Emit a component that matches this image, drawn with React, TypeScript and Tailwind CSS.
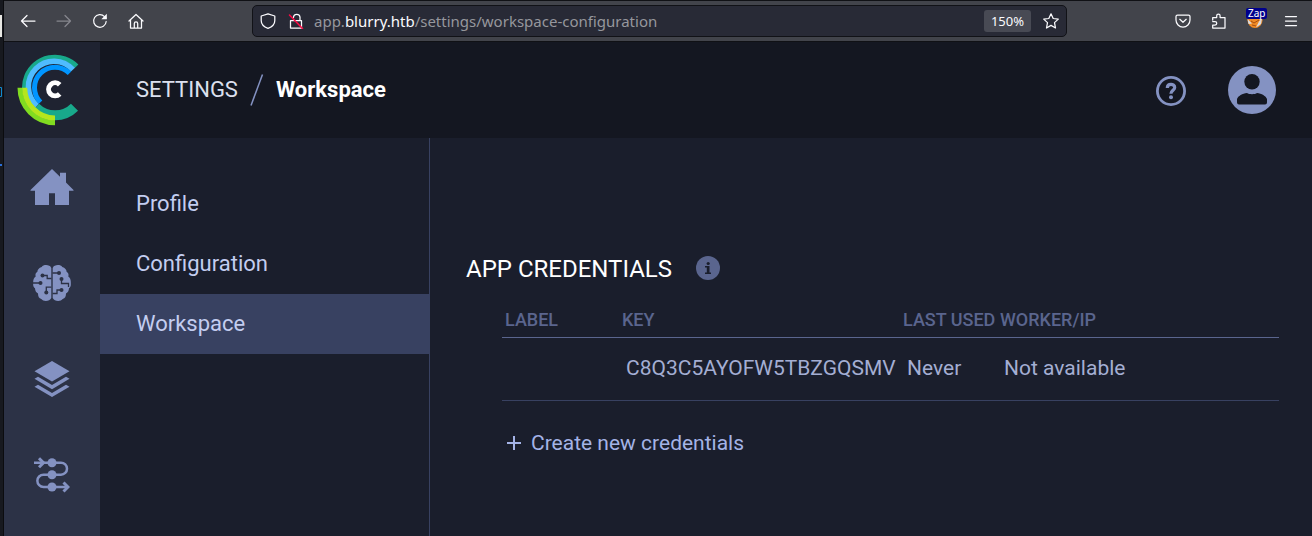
import type { ReactNode } from "react";

const navItems = ["Profile", "Configuration", "Workspace"];

function ToolButton({ label, children, dim }: { label: string; children: ReactNode; dim?: boolean }) {
  return (
    <button type="button" aria-label={label} className={dim ? "text-[#85868d]" : "text-[#fbfbfe]"}>
      <svg width="16" height="16" viewBox="0 0 16 16" fill="none" stroke="currentColor" strokeWidth="1.25" strokeLinecap="round" strokeLinejoin="round">
        {children}
      </svg>
    </button>
  );
}

function Browser() {
  return (
    <div className="flex h-[42px] shrink-0 items-center border-t border-b border-[#101115] bg-[#42444b] pr-[13px] pl-4">
      <div className="flex gap-5">
        <ToolButton label="Back">
          <path d="M15 8H1.5M7 2.5 1.5 8 7 13.5" />
        </ToolButton>
        <ToolButton label="Forward" dim>
          <path d="M1 8h13.5M9 2.5 14.5 8 9 13.5" />
        </ToolButton>
        <ToolButton label="Reload">
          <path d="M14.2 8.5A6.300 6.300 0 1 1 12.5 3.600L14 5" />
          <path d="M14.8 .8v5.500H9.300Z" fill="currentColor" stroke="none" />
        </ToolButton>
        <ToolButton label="Home">
          <path d="M1 8 8 1.5 15 8M2.5 7v8h11V7M6.300 15v-4.500a1.700 1.700 0 0 1 3.400 0V15" />
        </ToolButton>
      </div>
      <div className="ml-27 flex h-8 w-[815px] min-w-0 items-center rounded-[5px] border border-[#111217] bg-[#282a36] px-[7px]">
        <div className="flex gap-3">
          <ToolButton label="Tracking protection">
            <path d="M8 .8 14.8 3v4.500c0 4-3 6.500-6.800 7.800C4.200 14 1.200 11.500 1.200 7.500V3Z" />
          </ToolButton>
          <ToolButton label="Connection not secure">
            <path d="M5.500 4.500V4a3.300 3.300 0 0 1 6.500 0v3M2.500 7.500H13.500V15H2.500Z" />
            <path d="M1.500 2l13 13.500" stroke="#ff0a45" strokeWidth="1.5" />
          </ToolButton>
        </div>
        <div
          role="textbox"
          aria-label="Address"
          contentEditable
          suppressContentEditableWarning
          className="ml-2.5 grow truncate font-['Noto_Sans',sans-serif] text-[15px] leading-5 text-[#96979d] outline-none"
        >
          app.<span className="text-[#fbfbfe]">blurry.htb</span>/settings/workspace-configuration
        </div>
        <button type="button" className="h-[22px] rounded-[3px] bg-[#484a54] px-[7px] font-['Noto_Sans',sans-serif] text-[13px] leading-5 text-[#fbfbfe]">
          150%
        </button>
        <div className="ml-3 flex">
          <ToolButton label="Bookmark">
            <path d="m8 .8 2.200 4.700 5.100.6-3.800 3.500 1 5.400L8 12.400 3.500 15l1-5.400L.7 6.100l5.100-.6Z" />
          </ToolButton>
        </div>
      </div>
      <div className="ml-auto flex items-center gap-5">
        <ToolButton label="Save to Pocket">
          <path d="M2.500 2h11A1.500 1.500 0 0 1 15 3.500V7A7 7 0 0 1 1 7V3.500A1.500 1.500 0 0 1 2.500 2ZM4.800 6.300 8 9.300l3.200-3" />
        </ToolButton>
        <ToolButton label="Extensions">
          <path d="M1.700 7V4.500h4V2.700a1.700 1.700 0 0 1 3.400 0v1.800H14V15H1.700v-3H4a1.700 1.700 0 0 0 0-3.500H1.700" />
        </ToolButton>
        <button type="button" aria-label="FoxyProxy" className="relative size-4">
          <svg width="16" height="16" viewBox="0 0 16 16">
            <circle cx="8" cy="7.500" r="7.500" fill="#ef8b25" />
            <path d="M.5 6 5 10.500 1.500 11ZM15 5l-1 6-5 3.500 3-6Z" fill="#d9dbe0" />
            <path d="m4 8 3 2 5-3M5 12l4 1" stroke="#a64e12" fill="none" />
          </svg>
          <span className="absolute -top-[5px] -left-px rounded-[2px] bg-[#00008b] px-0.5 font-['Noto_Sans',sans-serif] text-[10px] leading-[11px] text-white">Zap</span>
        </button>
        <ToolButton label="Menu">
          <path d="M2.500 3.500h11M2.500 8h11M2.500 12.500h11" />
        </ToolButton>
      </div>
    </div>
  );
}

function Logo() {
  return (
    <svg width="62" height="72" viewBox="0 0 62 72" fill="none" aria-label="ClearML">
      <path d="M59.600 12.200A30.500 30.500 0 1 0 38 64.200" stroke="#18a98b" strokeWidth="5" />
      <path d="M18.600 53.200A27.500 27.500 0 0 0 57.500 53.200" stroke="#18a98b" strokeWidth="10" />
      <path d="M56 15.700A25.500 25.500 0 1 0 20 51.700" stroke="#4fbcff" strokeWidth="5.500" />
      <path d="M52.500 19.200A20.500 20.500 0 1 0 23.500 48.200" stroke="#0095ff" strokeWidth="5" />
      <path d="M3 33.700A35 35 0 0 0 38 68.700" stroke="#81dc20" strokeWidth="5" />
      <path d="M7.700 33.700A30.300 30.300 0 0 0 38 64" stroke="#b5e61d" strokeWidth="5" />
      <path d="M42.700 30.700A6.500 6.500 0 1 0 42.700 39.900" stroke="white" strokeWidth="5" />
    </svg>
  );
}

function SideNav() {
  return (
    <nav className="flex w-24 shrink-0 flex-col bg-[#2c3246] pt-px text-[#8492c2]">
      <a href="#dashboard" aria-label="Dashboard" className="flex h-24 items-center justify-center">
        <svg width="44" height="36" viewBox="0 0 44 36" fill="currentColor">
          <path d="M22 0 30 7.800V3.700h6V13.500l7.500 7.500v.7H39V36H25V24.300h-6V36H5V21.700H.5V21Z" />
        </svg>
      </a>
      <a href="#projects" aria-label="Projects" className="flex h-24 items-center justify-center">
        <svg width="38" height="36" viewBox="0 0 38 36">
          <path
            fill="currentColor"
            d="M18.300 3C17-.5 10.500-.8 8.700 2 6 3 4.500 4.500 4.300 7 2.500 8 2.200 9.500 2.700 11.500.8 13 0 15 .2 18 0 20.500.3 22 2 23.300c.2 2.500 1 4.200 3 5.200 0 3 1 5 3.300 5.500 2 2.800 8.500 2.500 10-1ZM19.700 3C21-.5 27.500-.8 29.300 2c2.700 1 4.200 2.500 4.400 5 1.800 1 2.100 2.500 1.600 4.500 1.900 1.500 2.700 3.500 2.500 6.500.2 2.500-.1 4-1.800 5.300-.2 2.500-1 4.200-3 5.200 0 3-1 5-3.300 5.500-2 2.800-8.500 2.500-10-1Z"
          />
          <path fill="none" stroke="#2c3246" strokeWidth="1.300" d="M9.500 10.500h4.700v3h4.300M0 18h7.500M13.300 27.500v-5.300h5M19.500 8H26M28.500 14v4.500h7V22M19.500 28.500H24V25h4.500" />
          <g fill="#2c3246">
            <circle cx="9.500" cy="10.500" r="2" />
            <circle cx="7.500" cy="18" r="2" />
            <circle cx="13.300" cy="27.500" r="2" />
            <circle cx="26" cy="8" r="2" />
            <circle cx="28.500" cy="14" r="2" />
            <circle cx="28.500" cy="25" r="2" />
          </g>
        </svg>
      </a>
      <a href="#datasets" aria-label="Datasets" className="flex h-24 items-center justify-center">
        <svg width="36" height="36" viewBox="0 0 36 36" fill="currentColor">
          <path d="M18 0 35.500 10.300 18 20.500.5 10.300Z" />
          <path d="M.5 17.700 4 15.700l14 8.200 14-8.200 3.500 2L18 28.200ZM.5 25.700 4 23.700l14 8.200 14-8.200 3.500 2L18 36Z" />
        </svg>
      </a>
      <a href="#pipelines" aria-label="Pipelines" className="flex h-24 items-center justify-center">
        <svg width="36" height="36" viewBox="0 0 36 36" fill="none" stroke="currentColor" strokeWidth="2.500">
          <path d="M0 5.700h27a6 6 0 0 1 0 12H9.500a6 6 0 0 0 0 12.300H34" />
          <path d="m5 1.200 4.500 4.500L5 10.200M29.500 25.500 34 30l-4.500 4.500" strokeWidth="3" />
          <g fill="currentColor" stroke="none">
            <circle cx="18" cy="5.700" r="4.500" />
            <circle cx="18" cy="17.700" r="4.500" />
            <circle cx="18" cy="30" r="4.500" />
          </g>
        </svg>
      </a>
    </nav>
  );
}

function Header() {
  return (
    <header className="flex h-24 shrink-0 bg-[#141721]">
      <a href="#home" className="flex w-24 items-center justify-center bg-[#1f2331] pr-2">
        <Logo />
      </a>
      <div className="flex grow items-center px-9">
        <div className="flex items-center text-[22px] leading-7">
          <a href="#settings" className="text-[#dce0ee]">SETTINGS</a>
          <svg width="14" height="32" viewBox="0 0 14 32" className="mx-3" stroke="#8492c2" strokeWidth="1.500">
            <path d="M1 31.500 12.500.5" />
          </svg>
          <h1 className="font-bold text-white">Workspace</h1>
        </div>
        <button type="button" aria-label="Help" className="mt-0.5 ml-auto text-[#8492c2]">
          <svg width="30" height="30" viewBox="0 0 30 30" fill="none" stroke="currentColor">
            <circle cx="15" cy="15" r="13.600" strokeWidth="2.800" />
            <path d="M11.300 12c0-5 7.400-4.600 7.400-.6 0 2.700-3.800 3-3.800 6.400" strokeWidth="3.200" />
            <circle cx="15" cy="21.200" r="2" fill="currentColor" stroke="none" />
          </svg>
        </button>
        <button type="button" aria-label="Account" className="ml-[42px]">
          <svg width="48" height="48" viewBox="0 0 48 48" fill="#141721">
            <circle cx="24" cy="24" r="24" fill="#8492c2" />
            <circle cx="24" cy="15.700" r="7.700" />
            <path d="M9 36.500V33C10 30 14.500 27.500 19 27c2 1.600 8 1.600 10 0 4.500.5 9 3 10 6v3.500q0 2-2 2H11q-2 0-2-2Z" />
          </svg>
        </button>
      </div>
    </header>
  );
}

function Credentials() {
  return (
    <main className="min-w-0 grow pt-[115px] pr-[33px] pl-9">
      <div className="flex items-center gap-6">
        <h2 className="text-2xl leading-8 text-white">APP CREDENTIALS</h2>
        <button type="button" aria-label="About app credentials" className="-mt-0.5">
          <svg width="24" height="24" viewBox="0 0 24 24" fill="#1a1e2c">
            <circle cx="12" cy="12" r="12" fill="#5a658e" />
            <path d="M9 10h4.500v6.500H15V18H9v-1.500h1.800v-5H9Z" />
            <circle cx="12.200" cy="7.500" r="1.600" />
          </svg>
        </button>
      </div>
      <div className="pl-9">
        <table className="mt-[17px] w-full table-fixed text-left whitespace-nowrap">
          <colgroup>
            <col className="w-[117px]" />
            <col className="w-[281px]" />
            <col className="w-[97px]" />
            <col />
          </colgroup>
          <thead>
            <tr className="border-b border-[#5a658e] text-lg leading-6 text-[#5a658e]">
              <th className="pt-1.5 pb-[5px] pl-[3px] font-medium">LABEL</th>
              <th className="pt-1.5 pb-[5px] pl-[3px] font-medium">KEY</th>
              <th className="pt-1.5 pb-[5px] pl-[3px] font-medium">LAST USED</th>
              <th className="pt-1.5 pb-[5px] pl-[3px] font-medium">WORKER/IP</th>
            </tr>
          </thead>
          <tbody>
            <tr className="h-[63px] border-b border-[#384161] text-[21px] leading-7 text-[#a4aed3]">
              <td></td>
              <td className="pb-0.5 pl-[7px]">C8Q3C5AYOFW5TBZGQSMV</td>
              <td className="pb-0.5 pl-[7px]">Never</td>
              <td className="pb-0.5 pl-[7px]">Not available</td>
            </tr>
          </tbody>
        </table>
        <button type="button" className="mt-7 flex items-center gap-2.5 pl-[5px] text-[21px] leading-7 text-[#a4b3e6]">
          <svg width="14" height="14" viewBox="0 0 14 14" stroke="currentColor" strokeWidth="2">
            <path d="M7 0v14M0 7h14" />
          </svg>
          Create new credentials
        </button>
      </div>
    </main>
  );
}

function WindowBehind() {
  return (
    <div className="w-1 shrink-0 border-r border-[#0b0c0f] bg-[#17191f]" aria-hidden="true">
      <svg width="3" height="170" viewBox="0 0 3 170">
        <path d="M0 15h2v22H0Z" fill="#e8e8e4" />
        <path d="M0 87.500h1.500v9H0" fill="none" stroke="#0f8ad0" />
        <path d="M0 164h2v2H0Z" fill="#2a6fdb" />
      </svg>
    </div>
  );
}

export default function App() {
  return (
    <div className="flex min-h-screen bg-[#1a1e2c] font-['Roboto',sans-serif]">
      <WindowBehind />
      <div className="flex min-w-0 grow flex-col">
        <Browser />
        <Header />
        <div className="flex grow">
          <SideNav />
          <aside className="w-[330px] shrink-0 border-r border-[#384161] pt-9">
            <ul className="text-[22px] leading-[60px] text-[#c3cdf0]">
              {navItems.map((item) => (
                <li key={item}>
                  <a href={"#" + item.toLowerCase()} className={item === "Workspace" ? "block bg-[#384161] pl-9" : "block pl-9"}>
                    {item}
                  </a>
                </li>
              ))}
            </ul>
          </aside>
          <Credentials />
        </div>
      </div>
    </div>
  );
}
